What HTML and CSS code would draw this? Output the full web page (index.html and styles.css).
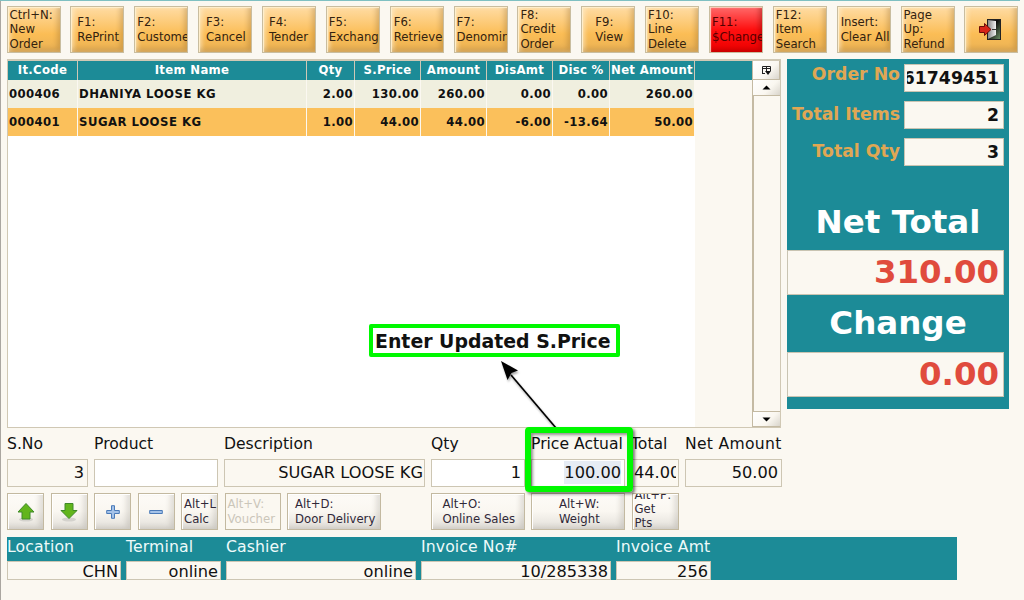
FILE: index.html
```html
<!DOCTYPE html>
<html lang="en">
<head>
    <meta charset="UTF-8">
    <meta name="viewport" content="width=device-width, initial-scale=1.0">
    <title>POS</title>
    <link rel="stylesheet" href="styles.css">
</head>
<body>
    <!-- Shortcut buttons -->
    <div class="toolbar">
        <button class="key p2">Ctrl+N:<br>New<br>Order</button>
        <button class="key p6">F1:<br>RePrint</button>
        <button class="key p2">F2:<br>Customer</button>
        <button class="key p7">F3:<br>Cancel</button>
        <button class="key p6">F4:<br>Tender</button>
        <button class="key p2">F5:<br>Exchange</button>
        <button class="key p3">F6:<br>Retrieve</button>
        <button class="key p2">F7:<br>Denomin</button>
        <button class="key p2">F8:<br>Credit<br>Order</button>
        <button class="key p13">F9:<br>View</button>
        <button class="key p2">F10:<br>Line<br>Delete</button>
        <button class="key red p2">F11:<br>$Change</button>
        <button class="key p2">F12:<br>Item<br>Search</button>
        <button class="key p3">Insert:<br>Clear All</button>
        <button class="key p2">Page<br>Up:<br>Refund</button>
        <button class="key exit">
            <svg width="24" height="22" viewBox="0 0 24 22">
                <defs>
                    <linearGradient id="dark" x1="0" y1="0" x2="1" y2="1"><stop offset="0.4" stop-color="#0c0c0c"/><stop offset="1" stop-color="#6f9468"/></linearGradient>
                    <linearGradient id="door" x1="0" y1="0" x2="1" y2="0"><stop offset="0" stop-color="#888"/><stop offset="1" stop-color="#f2f2f2"/></linearGradient>
                </defs>
                <rect x="8.500" y="0.500" width="13" height="20" fill="url(#dark)" stroke="#222"/>
                <path d="M9 1L17 2V16L9 20Z" fill="url(#door)"/>
                <path d="M13 10.500h4" stroke="#333"/>
                <path d="M0.500 7.500H5.500V4.500L12 10.500L5.500 16.500V13.500H0.500Z" fill="#d82418" stroke="#6b0d08"/>
            </svg>
        </button>
    </div>

    <div class="main">
        <!-- Item list -->
        <div class="list">
            <div class="grid">
                <div class="row head">
                    <span>It.Code</span><span>Item Name</span><span>Qty</span><span>S.Price</span><span>Amount</span><span>DisAmt</span><span>Disc %</span><span>Net Amount</span><span></span>
                </div>
                <div class="row">
                    <span>000406</span><span>DHANIYA LOOSE KG</span><span>2.00</span><span>130.00</span><span>260.00</span><span>0.00</span><span>0.00</span><span>260.00</span>
                </div>
                <div class="row selected">
                    <span>000401</span><span>SUGAR LOOSE KG</span><span>1.00</span><span>44.00</span><span>44.00</span><span>-6.00</span><span>-13.64</span><span>50.00</span>
                </div>
                <div class="empty"></div>
            </div>
            <div class="scroll">
                <div class="picker">
                    <svg width="11" height="11" viewBox="0 0 11 11"><path d="M1.500 8.500V1.500H9.500V6M1.500 3.500H9.500M5.500 1.500V6M1 8.500H4" fill="none" stroke="#222"/><path d="M4 6H10L7 10Z" fill="#111"/></svg>
                </div>
                <div class="arrow up"><svg width="9" height="5" viewBox="0 0 9 5"><path d="M0.500 4.500L4.500 0.500L8.500 4.500Z"/></svg></div>
                <div class="track"></div>
                <div class="arrow"><svg width="9" height="5" viewBox="0 0 9 5"><path d="M0.500 0.500L4.500 4.500L8.500 0.500Z"/></svg></div>
            </div>
        </div>

        <!-- Totals -->
        <div class="totals">
            <div class="line first"><label>Order No</label><div class="box"><span>61749451</span></div></div>
            <div class="line"><label>Total Items</label><div class="box"><span>2</span></div></div>
            <div class="line"><label>Total Qty</label><div class="box"><span>3</span></div></div>
            <h2 class="net">Net Total</h2>
            <div class="big">310.00</div>
            <h2 class="chg">Change</h2>
            <div class="big">0.00</div>
        </div>
    </div>

    <!-- Entry line -->
    <div class="entry">
        <div class="field"><label>S.No</label><div class="value">3</div></div>
        <div class="field"><label>Product</label><div class="value white"></div></div>
        <div class="field"><label>Description</label><div class="value desc">SUGAR LOOSE KG</div></div>
        <div class="field"><label>Qty</label><div class="value white qty">1</div></div>
        <div class="field"><label>Price Actual</label><div class="value white price"><span class="marked">100.00</span></div></div>
        <div class="field"><label>Total</label><div class="value cut"><span>44.00</span></div></div>
        <div class="field amount"><label>Net Amount</label><div class="value">50.00</div></div>
    </div>

    <div class="actions">
        <button class="act icon">
            <svg width="20" height="20" viewBox="0 0 20 20"><ellipse cx="10" cy="17.500" rx="7" ry="2" fill="#d4d2cd"/><path d="M10 1.500L18 10H14V17H6V10H2Z" fill="#62b51c" stroke="#3f8a28"/></svg>
        </button>
        <button class="act icon">
            <svg width="20" height="20" viewBox="0 0 20 20"><ellipse cx="10" cy="17.500" rx="7" ry="2" fill="#d4d2cd"/><path d="M10 16.500L18 8.500H14V1.500H6V8.500H2Z" fill="#62b51c" stroke="#3f8a28"/></svg>
        </button>
        <button class="act icon">
            <svg width="14" height="14" viewBox="0 0 14 14"><path d="M5.500 0.700H8.500V5.500H13.300V8.500H8.500V13.300H5.500V8.500H0.700V5.500H5.500Z" fill="#a4c2e8" stroke="#4a7ab8"/></svg>
        </button>
        <button class="act icon">
            <svg width="14" height="14" viewBox="0 0 14 14"><path d="M0.700 5.500H13.300V8.500H0.700Z" fill="#a4c2e8" stroke="#4a7ab8"/></svg>
        </button>
        <button class="act calc">Alt+L:<br>Calc</button>
        <button class="act voucher" disabled>Alt+V:<br>Voucher</button>
        <button class="act door">Alt+D:<br>Door Delivery</button>
        <button class="act sales">Alt+O:<br>Online Sales</button>
        <button class="act weight">Alt+W:<br>Weight</button>
        <button class="act pts"><span>Alt+P:<br>Get<br>Pts</span></button>
    </div>

    <!-- Session info -->
    <div class="status">
        <div class="info"><label>Location</label><div>CHN</div></div>
        <div class="info"><label>Terminal</label><div>online</div></div>
        <div class="info"><label>Cashier</label><div>online</div></div>
        <div class="info"><label>Invoice No#</label><div>10/285338</div></div>
        <div class="info"><label>Invoice Amt</label><div>256</div></div>
    </div>

    <!-- Callout -->
    <div class="note">Enter Updated S.Price</div>
    <svg class="pointer" width="80" height="80" viewBox="0 0 80 80">
        <path d="M61 68L16 15" stroke="#000" stroke-width="1.700"/>
        <path d="M6 1L23 10.500L16.500 13L12.500 20Z"/>
    </svg>
    <div class="frame"></div>
</body>
</html>
```
FILE: styles.css
```css
* {
    box-sizing: border-box;
}

body {
    margin: 0;
    padding: 6px 0 0 7px;
    width: 1024px;
    height: 600px;
    overflow: hidden;
    position: relative;
    background: linear-gradient(#7fc0c2, #7fc0c2) 0 0 / 1020px 1px no-repeat, linear-gradient(90deg, #aaa6a0 1px, #fbf8f1 1px);
    font-family: "DejaVu Sans", sans-serif;
    color: #111;
}

button {
    font-family: inherit;
    text-align: left;
    padding: 0;
    overflow: hidden;
    white-space: nowrap;
}

/* toolbar */
.toolbar {
    display: flex;
    gap: 9.870px;
    height: 47px;
    margin-left: -0.500px;
}

.key {
    width: 54px;
    height: 47px;
    flex: none;
    border: 1px solid #c9bd9f;
    box-shadow: inset 1px 1px 1px #fff0d0, inset -3px -3px 5px rgba(140, 100, 40, 0.3), inset 3px 0 4px rgba(255, 240, 210, 0.6);
    background: linear-gradient(#ffdca4, #fcc56a 45%, #fbbd55 60%, #e9b155);
    font-size: 11.700px;
    line-height: 14.200px;
    color: #33220f;
}

.red {
    background: linear-gradient(#ff6a6a, #fe1010 50%, #f00000);
    box-shadow: inset 1px 1px 1px #ffd0c0, inset -3px -3px 5px rgba(120, 0, 0, 0.35);
    color: #500;
}

.p2 { padding-left: 2px; }
.p3 { padding-left: 3px; }
.p6 { padding-left: 6px; }
.p7 { padding-left: 7px; }
.p13 { padding-left: 13px; }

.exit {
    display: flex;
    align-items: center;
    justify-content: center;
}

/* item list */
.main {
    display: flex;
    align-items: flex-start;
    gap: 7px;
    margin-top: 6px;
}

.list {
    display: flex;
    width: 774px;
    height: 369px;
    border: 1px solid #d0c8b4;
    border-top-width: 2px;
    font-size: 11.700px;
    font-weight: bold;
}

.grid {
    width: 744px;
    display: flex;
    flex-direction: column;
}

.row {
    display: grid;
    grid-template-columns: 70px 229px 48px 66px 66px 66px 57px 85px 57px;
    height: 28px;
    line-height: 28px;
}

.row span {
    background: #f0efdf;
    border-right: 1px solid #fbf8f1;
    border-bottom: 1px solid #fbf8f1;
    text-align: right;
    padding-right: 1px;
    white-space: nowrap;
    letter-spacing: 0.350px;
}

.row span:nth-child(-n+2) {
    text-align: left;
    padding-left: 1px;
}

.row span:nth-child(2) {
    letter-spacing: 0.500px;
}

.selected span {
    background: #fbc05b;
}

.head.row {
    height: 19px;
    line-height: 19px;
}

.head.row span {
    background: #1c8b97;
    color: #fff;
    text-align: center;
    border-right-color: #cfc8b6;
    border-bottom: 0;
    padding: 0;
    letter-spacing: 0.300px;
}

.head.row span:nth-child(9) {
    border: 0;
}

.empty {
    flex: 1;
    width: 687px;
    background: #fff;
}

.scroll {
    width: 28px;
    display: flex;
    flex-direction: column;
    border-left: 1px solid #c4baa3;
}

.picker, .arrow {
    display: flex;
    align-items: center;
    justify-content: center;
    background: linear-gradient(135deg, #fff, #faf7f0 60%, #d9d5cc);
    border-bottom: 1px solid #c4baa3;
}

.picker {
    height: 19px;
    border-right: 1px solid #c4baa3;
}

.arrow {
    height: 15px;
}

.up {
    height: 16px;
}

.track {
    flex: 1;
    border-left: 1px solid #c4baa3;
    border-bottom: 1px solid #c4baa3;
}

/* totals */
.totals {
    width: 222px;
    height: 350px;
    padding-top: 5px;
    background: #1c8b97;
    margin-left: -1px;
}

.line {
    display: flex;
    justify-content: flex-end;
    height: 28px;
    margin: 0 5px 9px 0;
    font-weight: bold;
    font-size: 17.300px;
}

.line label {
    color: #e0a753;
    line-height: 27px;
    margin-right: 4px;
    white-space: nowrap;
}

.first label {
    line-height: 21px;
}

.box {
    width: 100px;
    height: 28px;
    padding: 0 4px 0 2px;
    border: 1px solid #c9c4b2;
    background: #fbf8f1;
    line-height: 26px;
}

.box span {
    display: flex;
    justify-content: flex-end;
    overflow: hidden;
}

.totals h2 {
    margin: 0;
    color: #fff;
    font-size: 32.500px;
    text-align: center;
    line-height: 40px;
    font-weight: bold;
}

.totals .net {
    margin: 36px 0 8px;
}

.totals .chg {
    margin: 8px 0 9px;
}

.big {
    width: 217px;
    height: 45px;
    padding-right: 4px;
    border: 1px solid #c9c4b2;
    background: #fbf8f1;
    color: #e04b3d;
    font-size: 32.400px;
    font-weight: bold;
    line-height: 43px;
    text-align: right;
}

/* entry line */
.entry {
    display: grid;
    grid-template-columns: 81px 124px 201px 94px 94px 48px 97px;
    column-gap: 6px;
    padding-top: 7px;
    font-size: 16.200px;
}

.field {
    display: flex;
    flex-direction: column;
    white-space: nowrap;
}

.field label {
    height: 24px;
    line-height: 18px;
    font-size: 15.600px;
}

.amount label {
    letter-spacing: 0.300px;
}

.value {
    height: 28px;
    border: 1px solid #cdc6b3;
    text-align: right;
    line-height: 26px;
    padding-right: 3px;
    overflow: hidden;
}

.white {
    background: #fff;
}

.desc {
    padding-right: 1px;
}

.marked {
    background: #e6ecf4;
    padding: 2px 0;
}

.cut {
    padding: 0 2px;
    text-align: left;
}

.cut span {
    display: block;
    overflow: hidden;
}

/* action buttons */
.actions {
    display: flex;
    gap: 6.500px;
    margin-top: 6px;
    height: 37px;
}

.act {
    height: 37px;
    flex: none;
    border: 1px solid #c3b9a0;
    background: linear-gradient(#fdfbf7, #faf7f1 50%, #e2dfd9);
    box-shadow: inset 1px 1px 0 #fff, inset -4px -2px 5px rgba(120, 115, 105, 0.2);
    font-size: 11.700px;
    line-height: 14.200px;
    color: #302838;
}

.act:disabled {
    color: #cbc6ba;
    background: #fbf8f1;
    box-shadow: none;
}

.icon {
    width: 37px;
    display: flex;
    align-items: center;
    justify-content: center;
}

.calc { width: 37px; padding-left: 2px; }
.voucher { width: 56px; padding-left: 2px; }
.door { width: 94px; padding-left: 7px; }
.sales { width: 94px; padding-left: 11px; margin-left: 43px; }
.weight { width: 94px; padding-left: 27px; }
.pts { width: 47px; padding-left: 2px; }

/* three lines do not fit, keep the middle one centered */
.pts span {
    display: block;
    margin-top: -6px;
}

/* status bar */
.status {
    display: flex;
    gap: 5px;
    width: 950px;
    height: 43px;
    margin-top: 7px;
    background: #1c8b97;
    font-size: 16.200px;
}

.info label {
    display: block;
    height: 24px;
    line-height: 19px;
    color: #eefafa;
    white-space: nowrap;
    font-size: 15.700px;
    letter-spacing: 0.100px;
}

.info div {
    height: 19px;
    line-height: 19px;
    border: 1px solid #cdc6b3;
    background: #fbf8f1;
    text-align: right;
    padding-right: 2px;
}

.info:nth-child(1) { width: 114px; }
.info:nth-child(2) { width: 95px; }
.info:nth-child(3) { width: 190px; }
.info:nth-child(4) { width: 190px; }
.info:nth-child(5) { width: 95px; }

/* callout over the form */
.note {
    position: absolute;
    left: 369px;
    top: 324px;
    width: 251px;
    height: 33px;
    border: 4px solid #00f800;
    border-radius: 2px;
    padding-left: 2px;
    font-size: 18.900px;
    font-weight: bold;
    line-height: 26px;
    white-space: nowrap;
}

.pointer {
    position: absolute;
    left: 495px;
    top: 360px;
    filter: drop-shadow(1px 2px 1px rgba(0, 0, 0, 0.35));
}

.frame {
    position: absolute;
    left: 525px;
    top: 427px;
    width: 108px;
    height: 65px;
    border: 6px solid #00f800;
    border-radius: 4px;
    box-shadow: 2px 2px 3px rgba(0, 0, 0, 0.5), inset 2px 2px 3px rgba(0, 0, 0, 0.4);
}
```
